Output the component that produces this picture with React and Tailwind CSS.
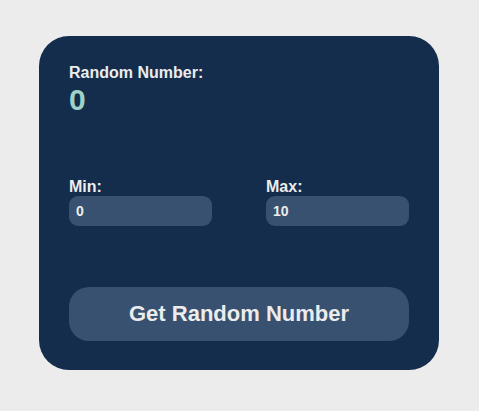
export default function App() {
  return (
    <div className="min-h-screen bg-[#ececec] pt-[36px] pl-[39px]" style={{ fontFamily: '"Liberation Sans", Arial, sans-serif' }}>
      <div className="w-[400px] bg-[#142d4c] rounded-[30px] px-[30px] pt-[28px] pb-[29px] flex flex-col text-[#ececec]">
        <div className="text-[16px] font-bold leading-[18px]">Random Number:</div>
        <div className="text-[30px] font-bold leading-[36px] text-[#9fd3c7]">0</div>
        <div className="flex justify-between mt-[59px]">
          <div className="w-[143px] flex flex-col">
            <label className="text-[16px] font-bold leading-[19px]">Min:</label>
            <div className="h-[30px] rounded-[9px] bg-[#385170] flex items-center px-[7px] text-[14px] font-bold">0</div>
          </div>
          <div className="w-[143px] flex flex-col">
            <label className="text-[16px] font-bold leading-[19px]">Max:</label>
            <div className="h-[30px] rounded-[9px] bg-[#385170] flex items-center px-[7px] text-[14px] font-bold">10</div>
          </div>
        </div>
        <button className="mt-[61px] h-[54px] w-full rounded-[20px] bg-[#385170] text-[22px] font-bold leading-none text-[#ececec] flex items-center justify-center">
          Get Random Number
        </button>
      </div>
    </div>
  );
}
